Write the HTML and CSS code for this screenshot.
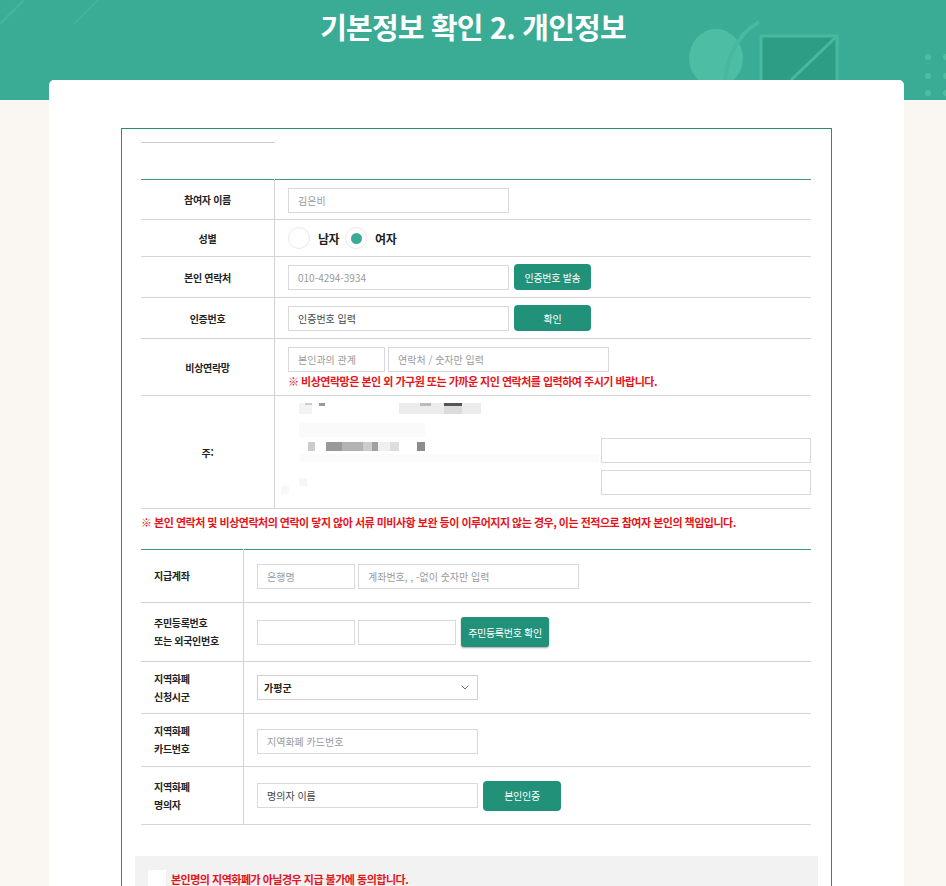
FILE: index.html
```html
<!DOCTYPE html>
<html lang="ko">
<head>
  <meta charset="UTF-8">
  <meta name="viewport" content="width=device-width, initial-scale=1.0">
  <title>기본정보 확인 2. 개인정보</title>
  <link rel="stylesheet" href="styles.css">
</head>
<body>
  <header class="top">
    <svg class="deco" width="946" height="100" viewBox="0 0 946 100">
      <path d="M0 24 L24 0" stroke="#55bca5" stroke-width="2" opacity=".6"/>
      <path d="M74 24 L98 0" stroke="#55bca5" stroke-width="2" opacity=".4"/>
      <ellipse cx="716" cy="58" rx="27" ry="29" fill="#4dbda4"/>
      <path d="M759 22 C737 34 722 62 725 100" stroke="#48b89f" stroke-width="4" fill="none"/>
      <rect x="760" y="35" width="78" height="65" fill="#2e9d85"/>
      <path d="M761 100 V36 H837 V80" stroke="#48b89f" stroke-width="3" fill="none"/>
      <path d="M791 80 L836 37" stroke="#48b89f" stroke-width="3"/>
      <circle cx="928" cy="57" r="3" fill="#4dbda4"/>
      <circle cx="928" cy="76" r="3" fill="#4dbda4"/>
      <circle cx="928" cy="93" r="3" fill="#4dbda4"/>
      <circle cx="946" cy="57" r="3" fill="#4dbda4"/>
      <circle cx="946" cy="76" r="3" fill="#4dbda4"/>
      <circle cx="946" cy="93" r="3" fill="#4dbda4"/>
    </svg>
    <h1>기본정보 확인 2. 개인정보</h1>
  </header>

  <main class="card">
    <section class="form-box">
      <div class="tab-line"></div>

      <table class="info">
        <tr class="h40">
          <th>참여자 이름</th>
          <td><input class="field w221" type="text" placeholder="김은비"></td>
        </tr>
        <tr class="h37">
          <th>성별</th>
          <td>
            <div class="gender">
              <span class="radio"></span><span class="radio-label">남자</span>
              <span class="radio on"></span><span class="radio-label">여자</span>
            </div>
          </td>
        </tr>
        <tr class="h41">
          <th>본인 연락처</th>
          <td>
            <div class="line">
              <input class="field w221" type="text" placeholder="010-4294-3934">
              <button class="btn">인증번호 발송</button>
            </div>
          </td>
        </tr>
        <tr class="h41">
          <th>인증번호</th>
          <td>
            <div class="line">
              <input class="field w221 dark" type="text" value="인증번호 입력">
              <button class="btn">확인</button>
            </div>
          </td>
        </tr>
        <tr class="h57">
          <th>비상연락망</th>
          <td>
            <div class="line tight">
              <input class="field w97" type="text" placeholder="본인과의 관계">
              <input class="field w221" type="text" placeholder="연락처 / 숫자만 입력">
            </div>
            <p class="warn">※ 비상연락망은 본인 외 가구원 또는 가까운 지인 연락처를 입력하여 주시기 바랍니다.</p>
          </td>
        </tr>
        <tr class="h113">
          <th>주:</th>
          <td class="addr">
            <div class="addr-wrap">
              <svg class="blur" width="326" height="112" viewBox="0 0 326 112">
                <rect x="24" y="7" width="13" height="11" fill="#f3f3f3"/>
                <rect x="30" y="7" width="7" height="2" fill="#ccc"/>
                <rect x="44" y="7" width="6" height="3" fill="#999"/>
                <rect x="124" y="7" width="82" height="11" fill="#ececec"/>
                <rect x="145" y="7" width="11" height="3" fill="#bbb"/>
                <rect x="169" y="7" width="18" height="11" fill="#dcdcdc"/>
                <rect x="169" y="7" width="18" height="3" fill="#555"/>
                <rect x="24" y="27" width="126" height="14" fill="#fafafa"/>
                <rect x="33" y="46" width="7" height="9" fill="#ccc"/>
                <rect x="51" y="46" width="16" height="9" fill="#999"/>
                <rect x="67" y="46" width="21" height="9" fill="#b3b3b3"/>
                <rect x="88" y="46" width="9" height="9" fill="#ccc"/>
                <rect x="97" y="46" width="6" height="9" fill="#a0a0a0"/>
                <rect x="103" y="46" width="12" height="9" fill="#f0f0f0"/>
                <rect x="115" y="46" width="9" height="9" fill="#ddd"/>
                <rect x="142" y="46" width="8" height="9" fill="#8c8c8c"/>
                <rect x="24" y="58" width="300" height="8" fill="#fbfbfb"/>
                <rect x="24" y="82" width="8" height="8" fill="#f6f6f6"/>
                <rect x="6" y="90" width="8" height="8" fill="#f8f8f8"/>
              </svg>
              <div class="addr-fields">
                <input class="field w209" type="text">
                <input class="field w209" type="text">
              </div>
            </div>
          </td>
        </tr>
      </table>

      <p class="warn wide">※ 본인 연락처 및 비상연락처의 연락이 닿지 않아 서류 미비사항 보완 등이 이루어지지 않는 경우, 이는 전적으로 참여자 본인의 책임입니다.</p>

      <table class="info extra">
        <tr class="h53">
          <th>지급계좌</th>
          <td>
            <div class="line tight">
              <input class="field w98" type="text" placeholder="은행명">
              <input class="field w221" type="text" placeholder="계좌번호, , -없이 숫자만 입력">
            </div>
          </td>
        </tr>
        <tr class="h59">
          <th>주민등록번호<br>또는 외국인번호</th>
          <td>
            <div class="line tight">
              <input class="field w98" type="text">
              <input class="field w98" type="text">
              <button class="btn tall wide-btn">주민등록번호 확인</button>
            </div>
          </td>
        </tr>
        <tr class="h52">
          <th>지역화폐<br>신청시군</th>
          <td>
            <div class="select w221">
              <span>가평군</span>
              <svg width="8" height="5" viewBox="0 0 8 5"><path d="M0.5 0.5 L4 4 L7.5 0.5" stroke="#777" fill="none"/></svg>
            </div>
          </td>
        </tr>
        <tr class="h53">
          <th>지역화폐<br>카드번호</th>
          <td><input class="field w221" type="text" placeholder="지역화폐 카드번호"></td>
        </tr>
        <tr class="h58">
          <th>지역화폐<br>명의자</th>
          <td>
            <div class="line">
              <input class="field w221 dark" type="text" value="명의자 이름">
              <button class="btn tall">본인인증</button>
            </div>
          </td>
        </tr>
      </table>

      <div class="agree">
        <span class="check"></span>
        <span class="agree-text">본인명의 지역화폐가 아닐경우 지급 불가에 동의합니다.</span>
      </div>
    </section>
  </main>
</body>
</html>
```

FILE: styles.css
```css
body {
  margin: 0;
  background: #faf6f1;
  font-family: "Noto Sans CJK KR", "Noto Sans", sans-serif;
  color: #222;
}
.top {
  position: relative;
  height: 100px;
  background: #3aab94;
  text-align: center;
  overflow: hidden;
}
.deco {
  position: absolute;
  top: 0;
  left: 0;
}
.top h1 {
  position: relative;
  margin: 0;
  padding-top: 8px;
  font-size: 29px;
  line-height: 36px;
  font-weight: 700;
  color: #fff;
  letter-spacing: -0.8px;
}
.card {
  position: relative;
  width: 855px;
  margin: -20px 0 0 49px;
  padding-top: 48px;
  background: #fff;
  border-radius: 5px 5px 0 0;
}
.form-box {
  width: 670px;
  margin-left: 72px;
  padding: 13px 20px 30px 19px;
  border: 1px solid #2a8c78;
}
.tab-line {
  width: 134px;
  border-top: 1px solid #ccc;
  margin-bottom: 36px;
}
table.info {
  width: 670px;
  border-collapse: collapse;
  border-top: 1px solid #3a9a86;
}
table.info tr {
  border-bottom: 1px solid #d4d4d4;
}
table.info th {
  width: 135px;
  padding: 0;
  border-right: 1px solid #d4d4d4;
  font-size: 10px;
  font-weight: 700;
  letter-spacing: -0.3px;
  text-align: center;
  color: #222;
}
table.info td {
  padding: 0 0 0 13px;
}
table.extra th {
  width: 89px;
  padding-left: 13px;
  text-align: left;
  line-height: 18px;
}
tr.h37 { height: 37px; }
tr.h40 { height: 40px; }
tr.h41 { height: 41px; }
tr.h52 { height: 52px; }
tr.h53 { height: 53px; }
tr.h57 { height: 57px; }
tr.h58 { height: 58px; }
tr.h59 { height: 59px; }
tr.h113 { height: 113px; }

.field {
  box-sizing: border-box;
  height: 25px;
  margin: 0;
  padding: 0 9px;
  border: 1px solid #d9d9d9;
  font-family: inherit;
  font-size: 10px;
  color: #555;
  vertical-align: middle;
}
.field::placeholder {
  color: #9a9a9a;
}
.field.dark {
  color: #444;
}
.w97 { width: 97px; }
.w98 { width: 98px; }
.w209 { width: 210px; }
.w221 { width: 221px; }

.line {
  display: flex;
  align-items: center;
  gap: 5px;
}
.line.tight {
  gap: 3px;
}
.line.tight .btn {
  margin-left: 2px;
}
.btn {
  box-sizing: border-box;
  width: 77px;
  height: 26px;
  border: 0;
  border-radius: 4px;
  background: #21917a;
  color: #fff;
  font-family: inherit;
  font-size: 10px;
  letter-spacing: -0.3px;
}
.btn.tall {
  height: 30px;
  width: 78px;
}
.btn.wide-btn {
  width: 88px;
  border-radius: 3px;
  box-shadow: 0 1px 2px rgba(0, 0, 0, 0.35);
}

.gender {
  display: flex;
  align-items: center;
}
.radio {
  box-sizing: border-box;
  width: 22px;
  height: 22px;
  border: 1px solid #f1e6e6;
  border-radius: 50%;
  background: #fff;
  display: flex;
  align-items: center;
  justify-content: center;
}
.radio.on::after {
  content: "";
  width: 11px;
  height: 11px;
  border-radius: 50%;
  background: #3aab94;
}
.radio-label {
  margin: 0 6px 0 8px;
  font-size: 12px;
  font-weight: 700;
  letter-spacing: -0.5px;
}

.warn {
  margin: 2px 0 0;
  font-size: 11px;
  line-height: 14px;
  font-weight: 700;
  letter-spacing: -0.5px;
  color: #e5141b;
}
.warn.wide {
  margin: 0;
  padding: 6px 0 20px;
}

table.info td.addr {
  padding-left: 0;
}
.addr-wrap {
  display: flex;
  align-items: flex-end;
}
.blur {
  display: block;
  flex: none;
}
.addr-fields {
  display: flex;
  flex-direction: column;
  gap: 7px;
  padding-bottom: 13px;
}

.select {
  box-sizing: border-box;
  height: 25px;
  padding: 0 8px 0 6px;
  border: 1px solid #cfcfcf;
  display: flex;
  align-items: center;
  justify-content: space-between;
  font-size: 10px;
  font-weight: 700;
}

.agree {
  margin: 31px -7px 0 -6px;
  padding: 14px 13px 12px;
  background: #f2f2f2;
  display: flex;
  align-items: center;
  gap: 5px;
}
.check {
  width: 18px;
  height: 18px;
  background: #fff;
}
.agree-text {
  font-size: 11px;
  font-weight: 700;
  letter-spacing: -0.5px;
  color: #e5141b;
}
```
